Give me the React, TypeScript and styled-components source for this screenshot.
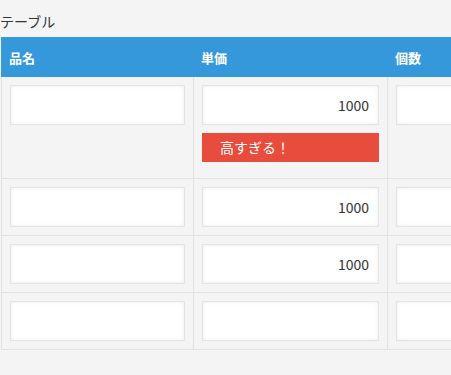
import React from "react";
import styled, {createGlobalStyle} from "styled-components";

const GlobalStyle = createGlobalStyle`
  html, body {
    margin: 0;
    padding: 0;
    background: #f4f4f4;
    overflow: hidden;
  }

  body {
    font-family: "Noto Sans CJK JP", "Noto Sans", sans-serif;
    color: #333;
  }
`;

type Item = {name: string; price: string; count: string; error?: string};

const items: Item[] = [
  {name: "", price: "1000", count: "", error: "高すぎる！"},
  {name: "", price: "1000", count: ""},
  {name: "", price: "1000", count: ""},
  {name: "", price: "", count: ""},
];

const columns = [
  {label: "品名", width: 192},
  {label: "単価", width: 194},
  {label: "個数", width: 194},
];

export default function App() {
  return (
    <>
      <GlobalStyle />
      <Title>テーブル</Title>

      <Table>
        <HeadRow>
          {columns.map((column) => (
            <HeadCell key={column.label} $width={column.width}>
              {column.label}
            </HeadCell>
          ))}
        </HeadRow>

        {items.map((item, index) => (
          <Row key={index}>
            <Cell $width={columns[0].width}>
              <Field type="text" defaultValue={item.name} />
            </Cell>
            <Cell $width={columns[1].width}>
              <Field type="text" defaultValue={item.price} $numeric />
              {item.error && <ErrorBox>{item.error}</ErrorBox>}
            </Cell>
            <Cell $width={columns[2].width}>
              <Field type="text" defaultValue={item.count} $numeric />
            </Cell>
          </Row>
        ))}
      </Table>
    </>
  );
}

const Title = styled.div`
  font-size: 14px;
  line-height: 20px;
  padding: 11px 0 6px;
  color: #333;
`;

const Table = styled.div`
  display: flex;
  flex-direction: column;
  width: max-content;
  margin-left: 1px;
`;

const HeadRow = styled.div`
  display: flex;
  height: 40px;
  background: #3498db;
`;

const HeadCell = styled.div<{$width: number}>`
  box-sizing: border-box;
  width: ${({$width}) => $width}px;
  padding: 0 8px;
  display: flex;
  align-items: center;
  color: #fff;
  font-size: 13px;
  font-weight: bold;
`;

const Row = styled.div`
  display: flex;
  border-bottom: 1px solid #e2e2e2;
`;

const Cell = styled.div<{$width: number}>`
  box-sizing: border-box;
  width: ${({$width}) => $width}px;
  padding: 8px;
  border-left: 1px solid #e2e2e2;
  display: flex;
  flex-direction: column;
`;

const Field = styled.input<{$numeric?: boolean}>`
  box-sizing: border-box;
  width: 100%;
  height: 40px;
  margin: 0;
  padding: 0 9px;
  border: 1px solid #e3e3e3;
  background: #fff;
  box-shadow: inset 0 0 4px rgba(0, 0, 0, 0.07);
  font-family: "Noto Sans CJK JP", "Noto Sans", sans-serif;
  font-size: 14px;
  color: #333;
  text-align: ${({$numeric}) => ($numeric ? "right" : "left")};
  outline: none;
`;

const ErrorBox = styled.div`
  margin: 8px 0;
  height: 29px;
  line-height: 29px;
  padding-left: 18px;
  background: #e74c3c;
  color: #fff;
  font-size: 14px;
`;
